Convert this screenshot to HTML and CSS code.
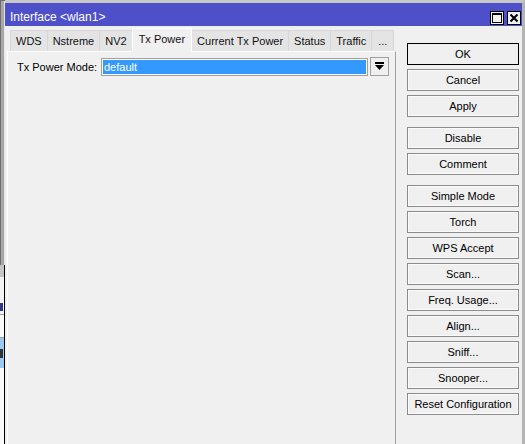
FILE: index.html
```html
<!DOCTYPE html>
<html>
<head>
<meta charset="utf-8">
<link rel="stylesheet" href="styles.css">
</head>
<body>
<div class="screen">
  <div class="edge">
    <div class="edge-frame"></div>
    <div class="edge-behind">
      <div class="bh-gray"></div>
      <div class="bh-white"></div>
      <div class="bh-frag"><span class="frag-mark"></span></div>
      <div class="bh-line"></div>
      <div class="bh-white2"></div>
      <div class="bh-line"></div>
      <div class="bh-sel"><span class="frag-mark dark"></span></div>
      <div class="bh-rest"></div>
    </div>
  </div>
  <div class="window">
    <div class="titlebar">
      <span class="title">Interface &lt;wlan1&gt;</span>
      <div class="wbtns">
        <span class="wbtn"><svg width="10" height="10" viewBox="0 0 10 10"><rect x="0.5" y="0.5" width="9" height="9" fill="none" stroke="#000"/><rect x="0" y="0" width="10" height="2" fill="#000"/></svg></span>
        <span class="wbtn"><svg width="10" height="10" viewBox="0 0 10 10"><path d="M1.5 1.5 L8.5 8.5 M8.5 1.5 L1.5 8.5" stroke="#000" stroke-width="2"/></svg></span>
      </div>
    </div>
    <div class="client">
      <div class="main">
        <div class="tabs">
          <span class="tab">WDS</span>
          <span class="tab">Nstreme</span>
          <span class="tab">NV2</span>
          <span class="tab active">Tx Power</span>
          <span class="tab">Current Tx Power</span>
          <span class="tab">Status</span>
          <span class="tab">Traffic</span>
          <span class="tab more">...</span>
        </div>
        <div class="panel">
          <div class="field">
            <span class="label">Tx Power Mode:</span>
            <div class="select">default</div>
            <div class="dd"><svg width="9" height="9" viewBox="0 0 9 9"><rect x="0" y="0" width="9" height="2" fill="#000"/><path d="M0 3 H9 L4.5 8 Z" fill="#000"/></svg></div>
          </div>
        </div>
      </div>
      <div class="side">
        <div class="group">
          <button class="btn default">OK</button>
          <button class="btn">Cancel</button>
          <button class="btn">Apply</button>
        </div>
        <div class="group">
          <button class="btn">Disable</button>
          <button class="btn">Comment</button>
        </div>
        <div class="group">
          <button class="btn">Simple Mode</button>
          <button class="btn">Torch</button>
          <button class="btn">WPS Accept</button>
          <button class="btn">Scan...</button>
          <button class="btn">Freq. Usage...</button>
          <button class="btn">Align...</button>
          <button class="btn">Sniff...</button>
          <button class="btn">Snooper...</button>
          <button class="btn">Reset Configuration</button>
        </div>
      </div>
    </div>
  </div>
</div>
</body>
</html>
```

FILE: styles.css
```css
* { box-sizing: border-box; }
html, body { margin: 0; padding: 0; }
body {
  width: 525px;
  height: 444px;
  overflow: hidden;
  font-family: Tahoma, "Liberation Sans", Arial, sans-serif;
  font-size: 11px;
  color: #000;
  background: #f0f0f0;
}
.screen {
  display: flex;
  width: 525px;
  height: 444px;
}
.edge {
  width: 5px;
  display: flex;
  flex-direction: column;
  flex-shrink: 0;
}
.edge-frame {
  height: 265px;
  background: linear-gradient(to right, #6e6e6e 0, #6e6e6e 1px, #a8a8a8 1px, #a8a8a8 4px, #e6e6e6 4px);
  border-top: 1px solid #6e6e6e;
}
.edge-behind {
  flex: 1;
  display: flex;
  flex-direction: column;
  border-right: 1px solid #000;
  overflow: hidden;
}
.bh-gray { height: 12px; background: #c6c6c6; }
.bh-white { height: 23px; background: #f4f4f4; }
.bh-frag { height: 14px; background: #f4f4f4; display: flex; align-items: center; }
.frag-mark { display: block; width: 3px; height: 8px; background: #2a3a8a; }
.frag-mark.dark { background: #333; height: 9px; }
.bh-line { height: 1px; background: #a0a0a0; }
.bh-white2 { height: 22px; background: #fafafa; }
.bh-sel { height: 30px; background: #99c9ef; display: flex; align-items: center; }
.bh-rest { flex: 1; background: #fafafa; }

.window {
  flex: 1;
  display: flex;
  flex-direction: column;
  border-top: 3px solid #c8c8c8;
  border-right: 3px solid #b4b4b4;
  box-shadow: inset 0 1px 0 #6e6e6e;
  background: #f0f0f0;
  min-width: 0;
}
.titlebar {
  height: 23px;
  background: #4d50c8;
  display: flex;
  align-items: center;
  justify-content: space-between;
  padding: 0 1px 0 5px;
  flex-shrink: 0;
}
.title {
  color: #fff;
  font-size: 12px;
  padding-top: 4px;
}
.wbtns {
  display: flex;
  gap: 3px;
  padding-top: 6px;
}
.wbtn {
  width: 14px;
  height: 14px;
  background: #f0f0f0;
  border: 1px solid #000;
  display: flex;
  align-items: center;
  justify-content: center;
}
.client {
  flex: 1;
  display: flex;
  min-height: 0;
}
.main {
  width: 391px;
  display: flex;
  flex-direction: column;
  padding-left: 2px;
  padding-top: 1px;
}
.tabs {
  display: flex;
  align-items: flex-end;
  height: 24px;
  padding-left: 3px;
}
.tab {
  height: 21px;
  line-height: 20px;
  padding: 0 5px;
  background: #e4e4e4;
  border: 1px solid #d6d6d6;
  border-bottom: none;
  margin-right: -1px;
  white-space: nowrap;
  color: #111;
}
.tab.more { padding: 0 6px; }
.tab.active {
  height: 24px;
  line-height: 21px;
  background: #f0f0f0;
  border-color: #ffffff;
  position: relative;
  z-index: 1;
  margin-bottom: -1px;
  padding: 0 6px;
}
.panel {
  flex: 1;
  border-top: 1px solid #ffffff;
  border-left: 1px solid #ffffff;
  border-right: 1px solid #a0a0a0;
  background: #f0f0f0;
  padding: 5px 0 0 9px;
}
.field {
  display: flex;
  align-items: center;
  gap: 2px;
}
.label {
  width: 82px;
  white-space: nowrap;
}
.select {
  width: 267px;
  height: 18px;
  border: 1px solid #a0a0a0;
  box-shadow: inset 0 0 0 1px #fff;
  background: #3399ff;
  color: #fff;
  padding: 0 2px;
  line-height: 16px;
}
.dd {
  width: 19px;
  height: 19px;
  border: 1px solid #a0a0a0;
  background: #f0f0f0;
  display: flex;
  align-items: center;
  justify-content: center;
}
.side {
  flex: 1;
  display: flex;
  flex-direction: column;
  gap: 10px;
  padding: 17px 0 0 11px;
}
.group {
  display: flex;
  flex-direction: column;
  gap: 4px;
}
.btn {
  width: 112px;
  height: 22px;
  padding: 0;
  margin: 0;
  font-family: inherit;
  font-size: 11px;
  color: #000;
  background: #f0f0f0;
  border: 1px solid #8c8c8c;
  box-shadow: inset 0 0 0 1px #fafafa;
  border-radius: 0;
}
.btn.default {
  border: 1px solid #000;
  box-shadow: inset 0 0 0 1px #f0f0f0;
}
```
